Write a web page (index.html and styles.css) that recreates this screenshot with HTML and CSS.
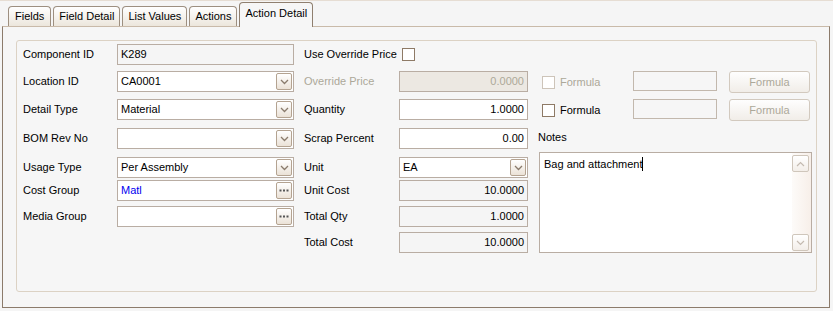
FILE: index.html
```html
<!DOCTYPE html>
<html lang="en">

<head>
    <meta charset="UTF-8">
    <title>Action Detail</title>
    <link rel="stylesheet" href="styles.css">
</head>

<body>
    <div class="window">
        <div class="tabs">
            <div class="tab">Fields</div>
            <div class="tab">Field Detail</div>
            <div class="tab">List Values</div>
            <div class="tab">Actions</div>
            <div class="tab active">Action Detail</div>
        </div>

        <div class="panel">
            <div class="group">

                <div class="col col-left">
                    <div class="lbl">Component ID</div>
                    <div class="field readonly">K289</div>

                    <div class="lbl">Location ID</div>
                    <div class="field combo">CA0001<span class="btn-drop"><svg width="9" height="6" viewBox="0 0 9 6"><polyline points="1,1 4.5,4.5 8,1" fill="none" stroke="#8a7b6c" stroke-width="1.3"/></svg></span></div>

                    <div class="lbl">Detail Type</div>
                    <div class="field combo">Material<span class="btn-drop"><svg width="9" height="6" viewBox="0 0 9 6"><polyline points="1,1 4.5,4.5 8,1" fill="none" stroke="#8a7b6c" stroke-width="1.3"/></svg></span></div>

                    <div class="lbl">BOM Rev No</div>
                    <div class="field combo"><span class="btn-drop"><svg width="9" height="6" viewBox="0 0 9 6"><polyline points="1,1 4.5,4.5 8,1" fill="none" stroke="#8a7b6c" stroke-width="1.3"/></svg></span></div>

                    <div class="lbl">Usage Type</div>
                    <div class="field combo">Per Assembly<span class="btn-drop"><svg width="9" height="6" viewBox="0 0 9 6"><polyline points="1,1 4.5,4.5 8,1" fill="none" stroke="#8a7b6c" stroke-width="1.3"/></svg></span></div>

                    <div class="lbl">Cost Group</div>
                    <div class="field combo link">Matl<span class="btn-drop"><svg width="10" height="3" viewBox="0 0 10 3"><rect x="0.5" y="0.5" width="2" height="2" fill="#555"/><rect x="4" y="0.5" width="2" height="2" fill="#555"/><rect x="7.5" y="0.5" width="2" height="2" fill="#555"/></svg></span></div>

                    <div class="lbl">Media Group</div>
                    <div class="field combo"><span class="btn-drop"><svg width="10" height="3" viewBox="0 0 10 3"><rect x="0.5" y="0.5" width="2" height="2" fill="#555"/><rect x="4" y="0.5" width="2" height="2" fill="#555"/><rect x="7.5" y="0.5" width="2" height="2" fill="#555"/></svg></span></div>
                </div>

                <div class="col col-mid">
                    <div class="lbl">Use Override Price</div>
                    <div class="cell"><span class="check"></span></div>

                    <div class="lbl disabled">Override Price</div>
                    <div class="field num off">0.0000</div>

                    <div class="lbl">Quantity</div>
                    <div class="field num">1.0000</div>

                    <div class="lbl">Scrap Percent</div>
                    <div class="field num">0.00</div>

                    <div class="lbl">Unit</div>
                    <div class="field combo">EA<span class="btn-drop"><svg width="9" height="6" viewBox="0 0 9 6"><polyline points="1,1 4.5,4.5 8,1" fill="none" stroke="#8a7b6c" stroke-width="1.3"/></svg></span></div>

                    <div class="lbl">Unit Cost</div>
                    <div class="field num readonly">10.0000</div>

                    <div class="lbl">Total Qty</div>
                    <div class="field num readonly">1.0000</div>

                    <div class="lbl">Total Cost</div>
                    <div class="field num readonly">10.0000</div>
                </div>

                <div class="col-right">
                    <div class="formula-row">
                        <span class="check dim"></span>
                        <span class="formula-lbl disabled">Formula</span>
                        <span class="formula-box"></span>
                        <span class="formula-btn">Formula</span>
                    </div>
                    <div class="formula-row second">
                        <span class="check"></span>
                        <span class="formula-lbl">Formula</span>
                        <span class="formula-box"></span>
                        <span class="formula-btn">Formula</span>
                    </div>
                    <div class="notes-lbl">Notes</div>
                    <div class="notes">
                        <div class="notes-text">Bag and attachment<span class="caret"></span></div>
                        <div class="scroll">
                            <span class="scroll-btn"><svg width="9" height="6" viewBox="0 0 9 6"><polyline points="1,5 4.5,1.5 8,5" fill="none" stroke="#c4bab0" stroke-width="1.2"/></svg></span>
                            <span class="scroll-btn"><svg width="9" height="6" viewBox="0 0 9 6"><polyline points="1,1 4.5,4.5 8,1" fill="none" stroke="#c4bab0" stroke-width="1.2"/></svg></span>
                        </div>
                    </div>
                </div>

            </div>
        </div>
    </div>
</body>

</html>
```

FILE: styles.css
```css
body {
    margin: 0;
    padding: 0;
    background-color: #f5f5f5;
    font-family: 'Liberation Sans', Arial, sans-serif;
    font-size: 11px;
    color: #000;
}

.window {
    border-top: 1px solid #e6ddd3;
    height: 310px;
}

/* tab strip */
.tabs {
    display: flex;
    align-items: flex-end;
    height: 25px;
    padding-left: 8px;
    gap: 2px;
    position: relative;
    z-index: 1;
}

.tab {
    height: 19px;
    line-height: 19px;
    padding: 0 5px;
    border: 1px solid #9d8f80;
    border-bottom: none;
    border-radius: 4px 4px 0 0;
    background: linear-gradient(#ffffff, #ece6dc);
}

.tab:first-child {
    padding: 0 6px;
}

.tab.active {
    height: 24px;
    line-height: 21px;
    margin-bottom: -1px;
    padding: 0 5px;
    background: #f6f6f6;
    border-color: #8f7f6f;
}

.panel {
    margin: 0 3px 0 2px;
    height: 282px;
    border: 1px solid #8c7b6b;
    border-top-color: #c9baa9;
    background-color: #f6f6f6;
    padding: 13px 12px 0 13px;
    box-sizing: border-box;
}

.group {
    display: flex;
    height: 252px;
    border: 1px solid #dcd2c4;
    border-radius: 3px;
    padding: 3px 0 0 6px;
    box-sizing: border-box;
}

/* label / field columns */
.col {
    display: grid;
    grid-template-rows: 27px 28px 29px 29px 23px 26px 26px 21px;
    align-items: start;
}

.col-left {
    grid-template-columns: 94px 177px;
}

.col-mid {
    grid-template-columns: 95px 129px;
    margin-left: 10px;
}

.lbl {
    height: 21px;
    line-height: 21px;
    white-space: nowrap;
}

.disabled {
    color: #aca899;
}

.field {
    position: relative;
    height: 21px;
    line-height: 19px;
    border: 1px solid #b9ada3;
    background: #fff;
    padding: 0 3px;
    box-sizing: border-box;
    white-space: nowrap;
}

.field.readonly {
    background: #f5f5f5;
}

.field.num {
    text-align: right;
}

.field.off {
    background: #ece8e2;
    color: #aca899;
}

.field.link {
    color: #0000f0;
}

.btn-drop {
    position: absolute;
    top: 1px;
    right: 1px;
    width: 16px;
    height: 17px;
    border: 1px solid #b4a391;
    border-radius: 2px;
    box-sizing: border-box;
    background: linear-gradient(#ffffff, #ebe2d7);
    display: flex;
    align-items: center;
    justify-content: center;
}

.cell {
    height: 21px;
    display: flex;
    align-items: center;
}

.check {
    display: inline-block;
    width: 13px;
    height: 13px;
    border: 1px solid #8e7a66;
    background: #fff;
    box-sizing: border-box;
}

.cell .check {
    margin-left: 3px;
}

.check.dim {
    border-color: #cdc4b9;
}

/* right column */
.col-right {
    display: flex;
    flex-direction: column;
    margin-left: 10px;
    padding-top: 27px;
}

.formula-row {
    display: flex;
    align-items: center;
    height: 22px;
}

.formula-row.second {
    margin-top: 6px;
}

.formula-row .check {
    margin-left: 4px;
}

.formula-lbl {
    width: 73px;
    margin-left: 5px;
}

.formula-box {
    width: 84px;
    height: 20px;
    border: 1px solid #c2b8ad;
    box-sizing: border-box;
    margin-top: -2px;
}

.formula-btn {
    width: 81px;
    height: 22px;
    line-height: 20px;
    margin-left: 12px;
    border: 1px solid #d2c9be;
    border-radius: 3px;
    box-sizing: border-box;
    background: linear-gradient(#fefefe, #f1ede8);
    color: #aca899;
    text-align: center;
}

.notes-lbl {
    height: 14px;
    line-height: 14px;
    margin-top: 9px;
}

.notes {
    display: flex;
    width: 273px;
    height: 101px;
    margin-top: 8px;
    margin-left: 1px;
    border: 1px solid #b9ada3;
    background: #fff;
    box-sizing: border-box;
}

.notes-text {
    flex: 1;
    padding: 3px 0 0 4px;
    line-height: 16px;
}

.caret {
    display: inline-block;
    width: 1px;
    height: 14px;
    background: #000;
    vertical-align: -3px;
}

.scroll {
    width: 18px;
    display: flex;
    flex-direction: column;
    justify-content: space-between;
    padding: 2px 1px 1px 0;
    background: linear-gradient(to right, #fdfbf9, #f7efe9);
}

.scroll-btn {
    width: 17px;
    height: 17px;
    border: 1px solid #cfc6bb;
    border-radius: 2px;
    box-sizing: border-box;
    background: linear-gradient(#ffffff, #f3eee9);
    display: flex;
    align-items: center;
    justify-content: center;
}
```
